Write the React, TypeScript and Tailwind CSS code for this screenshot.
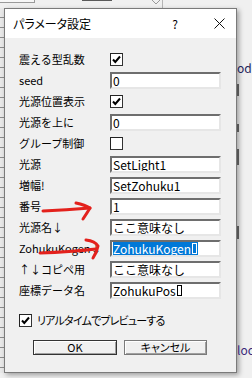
const ui = "font-['Noto_Sans_CJK_JP','Noto_Sans',sans-serif]";

function Check({ on }: { on: boolean }) {
  return (
    <div className="flex h-[13px] w-[13px] items-center justify-center border border-[#333] border-t-[#222] border-l-[#222] bg-white">
      {on && (
        <svg width="11" height="11" viewBox="0 0 11 11">
          <path d="M2 5.5 L4.3 8 L9 2.5" fill="none" stroke="#000" strokeWidth="2" />
        </svg>
      )}
    </div>
  );
}

// tall empty box glyph seen after some values
function Tofu({ light }: { light?: boolean }) {
  return (
    <span
      className={`ml-[1px] inline-block h-[11px] w-[5px] border ${light ? "border-white" : "border-black"}`}
    />
  );
}

function Field({ value, selected, box }: { value: string; selected?: boolean; box?: boolean }) {
  return (
    <div className="flex h-[17px] w-[111px] items-center overflow-hidden border-2 border-t-[#6e6e6e] border-l-[#6e6e6e] border-r-[#e6e6e6] border-b-[#e6e6e6] bg-white pl-[1px] text-[12px] leading-none text-black">
      {selected ? (
        <span className="flex h-[14px] items-center bg-[#0078d7] pr-[1px] text-white">
          {value}
          <Tofu light />
        </span>
      ) : (
        <>
          {value}
          {box && <Tofu />}
        </>
      )}
    </div>
  );
}

type RowProps = { label: string; check?: boolean; value?: string; selected?: boolean; box?: boolean };

function Row({ label, check, value, selected, box }: RowProps) {
  return (
    <div className="flex h-[21px] items-center">
      <div className="w-[91px] whitespace-nowrap text-[11px] leading-none text-black">{label}</div>
      {check !== undefined ? (
        <Check on={check} />
      ) : (
        <Field value={value ?? ""} selected={selected} box={box} />
      )}
    </div>
  );
}

const rows: RowProps[] = [
  { label: "震える型乱数", check: true },
  { label: "seed", value: "0" },
  { label: "光源位置表示", check: true },
  { label: "光源を上に", value: "0" },
  { label: "グループ制御", check: false },
  { label: "光源", value: "SetLight1" },
  { label: "増幅!", value: "SetZohuku1" },
  { label: "番号", value: "1" },
  { label: "光源名↓", value: "ここ意味なし" },
  { label: "ZohukuKogen↓", value: "ZohukuKogen", selected: true },
  { label: "↑↓コピペ用", value: "ここ意味なし" },
  { label: "座標データ名", value: "ZohukuPos", box: true },
];

export default function App() {
  return (
    <div className={`relative h-[378px] w-[252px] overflow-hidden bg-[#f0f0f0] ${ui}`}>
      {/* window behind: top strip */}
      <div className="flex h-[8px] items-start">
        <div className="h-[3px] w-[35px] border-b border-r border-[#9a9a9a] bg-[#f7f7f7]" />
        <div className="ml-[47px] h-[1px] w-[30px] bg-[#5a5a5a]" />
        <svg className="ml-[38px]" width="12" height="8" viewBox="0 0 12 8">
          <path d="M2 0 L6 4 L10 0" fill="none" stroke="#9a9a9a" strokeWidth="1" />
        </svg>
        <div className="h-[8px] w-[1px] bg-[#b5b5b5]" />
      </div>

      <div className="flex">
        {/* left strip of window behind */}
        <div className="h-[365px] w-[4px] bg-[repeating-linear-gradient(to_bottom,#e9e9e9_0px,#e9e9e9_9px,#8c8c8c_9px,#8c8c8c_10px)]" />

        {/* dialog */}
        <div className="flex h-[365px] w-[233px] flex-col border border-[#7a7a7a] bg-[#f0f0f0] shadow-[2px_2px_5px_rgba(0,0,0,0.35)]">
          <div className="flex h-[29px] items-center bg-white pl-[8px]">
            <span className="text-[12px] leading-none text-black [font-feature-settings:'palt']">パラメータ設定</span>
            <span className="ml-[81px] text-[12px] leading-none text-black">?</span>
            <svg className="ml-[36px]" width="11" height="11" viewBox="0 0 11 11">
              <path d="M0.5 0.5 L10.5 10.5 M10.5 0.5 L0.5 10.5" stroke="#111" strokeWidth="1" />
            </svg>
          </div>

          <div className="flex flex-col pl-[14px] pt-[11px]">
            {rows.map((r) => (
              <Row key={r.label} {...r} />
            ))}

            <div className="mt-[9px] flex h-[21px] items-center">
              <Check on={true} />
              <span className="ml-[5px] text-[11px] leading-none tracking-[-0.8px] text-black [font-feature-settings:'palt']">
                リアルタイムでプレビューする
              </span>
            </div>

            <div className="ml-[14px] mt-[9px] flex gap-[7px]">
              <button className="flex h-[15px] w-[84px] items-center justify-center border border-[#333] bg-[#f0f0f0] text-[11px] leading-none text-black shadow-[inset_1px_1px_0_#fff,inset_-1px_-1px_0_#a0a0a0]">
                OK
              </button>
              <button className="flex h-[15px] w-[83px] items-center justify-center border border-[#7a7a7a] bg-[#f0f0f0] text-[11px] leading-none text-black shadow-[inset_1px_1px_0_#fff,inset_-1px_-1px_0_#a0a0a0] [font-feature-settings:'palt']">
                キャンセル
              </button>
            </div>
          </div>
        </div>

        {/* right strip of window behind */}
        <div className="flex h-[365px] w-[15px] flex-col overflow-hidden">
          <div className="mt-[54px] whitespace-nowrap text-[12px] leading-none text-[#23235a]">ode</div>
          <div className="mt-[10px] h-[12px] w-[2px] bg-[#555]" />
          <div className="mt-[28px] h-[8px] w-[2px] bg-[#555]" />
          <div className="mt-[17px] h-[16px] w-[2px] bg-[#555]" />
          <div className="mt-[61px] h-[13px] w-[2px] bg-[#555]" />
          <div className="mt-[105px] whitespace-nowrap text-[12px] leading-none text-[#3b2a7a]">loc</div>
        </div>
      </div>

      {/* red hand-drawn arrows */}
      <svg className="pointer-events-none absolute left-0 top-0" width="252" height="378">
        <g fill="none" stroke="#e3211c" strokeWidth="3" strokeLinecap="round" strokeLinejoin="round">
          <path d="M43 211 Q66 210 90 208" />
          <path d="M76 203 Q85 205 90 208 Q87 213 83 219" />
          <path d="M40 253 Q70 252 96 249" />
          <path d="M86 240 Q95 241 98 246 Q97 252 93 258" />
        </g>
      </svg>
    </div>
  );
}
